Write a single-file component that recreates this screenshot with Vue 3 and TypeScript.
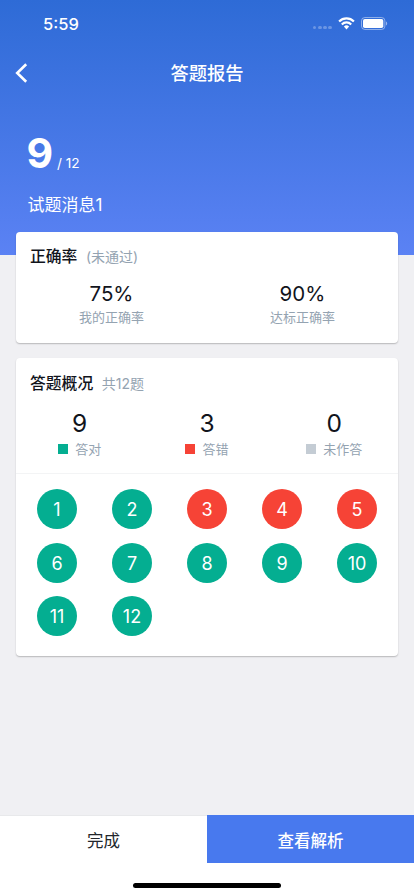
<script setup lang="ts">
type AnswerState = 'right' | 'wrong' | 'blank'

interface Summary {
  value: number
  label: string
  state: AnswerState
}

interface Question {
  no: number
  state: AnswerState
}

const total = 12
const wrongOnes = [3, 4, 5]

const questions: Question[] = Array.from({ length: total }, (_, i) => ({
  no: i + 1,
  state: wrongOnes.includes(i + 1) ? 'wrong' : 'right',
}))

const countOf = (state: AnswerState): number =>
  questions.filter((q) => q.state === state).length

const summaries: Summary[] = [
  { value: countOf('right'), label: '答对', state: 'right' },
  { value: countOf('wrong'), label: '答错', state: 'wrong' },
  { value: countOf('blank'), label: '未作答', state: 'blank' },
]

const rates = [
  { value: '75%', label: '我的正确率' },
  { value: '90%', label: '达标正确率' },
]
</script>

<template>
  <div class="screen">
    <header class="hero">
      <div class="status">
        <span class="time">5:59</span>
        <div class="indicators">
          <div class="signal"><i v-for="n in 4" :key="n"></i></div>
          <svg class="wifi" width="17" height="13" viewBox="0 0 17 13">
            <g fill="none" stroke="#fff" stroke-width="2.2">
              <path d="M1.1 4.5a10.4 10.4 0 0 1 14.8 0" />
              <path d="M3.8 7.4a6.6 6.6 0 0 1 9.4 0" />
            </g>
            <path d="M5.9 9.6a3.7 3.7 0 0 1 5.2 0L8.5 12.4z" fill="#fff" />
          </svg>
          <svg class="battery" width="27" height="13" viewBox="0 0 27 13">
            <rect x="0.5" y="0.5" width="23.4" height="12" rx="3.4" fill="none" stroke="#fff" stroke-opacity="0.45" />
            <rect x="2" y="2" width="20.3" height="9" rx="1.8" fill="#fff" />
            <path d="M25 4.5c1.6.6 1.6 3.4 0 4z" fill="#fff" fill-opacity="0.5" />
          </svg>
        </div>
      </div>

      <nav class="nav">
        <button class="back" type="button" aria-label="返回">
          <svg width="13" height="20" viewBox="0 0 13 20">
            <path d="M11.2 1.2 2.2 10l9 8.8" fill="none" stroke="#fff" stroke-width="2.6" />
          </svg>
        </button>
        <h1>答题报告</h1>
      </nav>

      <div class="score">
        <strong>{{ countOf('right') }}</strong>
        <span>/ {{ total }}</span>
      </div>
      <p class="paper">试题消息1</p>
    </header>

    <main class="content">
      <section class="card rate-card">
        <div class="card-title">
          <h2>正确率</h2>
          <span>(未通过)</span>
        </div>
        <div class="rates">
          <div v-for="r in rates" :key="r.label" class="rate">
            <b>{{ r.value }}</b>
            <span>{{ r.label }}</span>
          </div>
        </div>
      </section>

      <section class="card overview-card">
        <div class="card-title">
          <h2>答题概况</h2>
          <span>共{{ total }}题</span>
        </div>
        <div class="summaries">
          <div v-for="s in summaries" :key="s.state" class="summary">
            <b>{{ s.value }}</b>
            <span class="legend"><i :class="s.state"></i>{{ s.label }}</span>
          </div>
        </div>
        <div class="questions">
          <span v-for="q in questions" :key="q.no" class="question" :class="q.state">{{ q.no }}</span>
        </div>
      </section>
    </main>

    <footer class="footer">
      <div class="actions">
        <button class="done" type="button">完成</button>
        <button class="review" type="button">查看解析</button>
      </div>
      <div class="home-bar"></div>
    </footer>
  </div>
</template>

<style>
body {
  margin: 0;
  background: #f0f0f2;
}
</style>

<style scoped>
.screen {
  display: flex;
  flex-direction: column;
  box-sizing: border-box;
  width: 414px;
  height: 896px;
  overflow: hidden;
  background: #f0f0f3;
  color: #11141c;
  font-family: Inter, 'Noto Sans CJK SC', sans-serif;
}

h1,
h2,
p {
  margin: 0;
}

button {
  border: 0;
  padding: 0;
  background: none;
  font-family: inherit;
}

.hero {
  flex: none;
  box-sizing: border-box;
  height: 254.5px;
  background: linear-gradient(#2e6bd6, #5b82f4);
  color: #fff;
}

.status {
  display: flex;
  align-items: center;
  justify-content: space-between;
  height: 47px;
  padding: 0 26px 0 43px;
}

.time {
  font-size: 16.5px;
  font-weight: 500;
  line-height: 20px;
}

.indicators {
  display: flex;
  align-items: center;
}

.signal {
  display: flex;
  gap: 1.4px;
  margin: 8px 6px 0 0;
}

.signal i {
  width: 3.8px;
  height: 3.8px;
  border-radius: 50%;
  background: rgba(255, 255, 255, 0.28);
}

.battery {
  margin-left: 6px;
}

.nav {
  display: grid;
  grid-template-columns: 48px 1fr 48px;
  align-items: center;
  height: 51px;
}

.back {
  display: flex;
  padding-left: 15px;
}

.nav h1 {
  font-size: 18.3px;
  font-weight: 500;
  line-height: 28px;
  text-align: center;
}

.score {
  display: flex;
  align-items: baseline;
  gap: 5px;
  height: 50px;
  margin-top: 30px;
  padding-left: 26.5px;
}

.score strong {
  font-size: 41px;
  font-weight: 700;
  line-height: 50px;
  letter-spacing: -1.2px;
}

.score span {
  font-size: 13.7px;
}

.paper {
  margin-top: 13.5px;
  padding-left: 27.5px;
  font-size: 17px;
  line-height: 26px;
}

.content {
  display: flex;
  flex: 1;
  flex-direction: column;
  gap: 15.5px;
  margin-top: -23px;
  padding: 0 16px;
}

.card {
  box-sizing: border-box;
  border-radius: 4px;
  background: #fff;
  box-shadow: 0 1px 1.5px rgba(0, 0, 0, 0.24);
}

.rate-card {
  height: 111px;
}

.overview-card {
  height: 298px;
}

.card-title {
  display: flex;
  align-items: center;
  gap: 8.5px;
  height: 50px;
  padding-left: 14px;
}

.overview-card .card-title {
  height: 51px;
}

.card-title h2 {
  font-size: 15.8px;
  font-weight: 500;
  line-height: 24px;
}

.card-title span {
  color: #94a3b1;
  font-size: 14px;
  line-height: 24px;
}

.rates {
  display: grid;
  grid-template-columns: 1fr 1fr;
}

.rate {
  display: flex;
  flex-direction: column;
  align-items: center;
}

.rate b {
  font-size: 20.5px;
  font-weight: 400;
  line-height: 24px;
}

.rate span,
.legend {
  color: #94a3b1;
  font-size: 13px;
  line-height: 20px;
}

.rate span {
  margin-top: 1px;
}

.summaries {
  display: grid;
  grid-template-columns: repeat(3, 1fr);
  height: 63.5px;
  border-bottom: 1px solid #f3f4f5;
}

.summary {
  display: flex;
  flex-direction: column;
  align-items: center;
}

.summary b {
  font-size: 24.5px;
  font-weight: 400;
  line-height: 28px;
}

.legend {
  display: flex;
  align-items: center;
  gap: 7px;
  margin-top: 2px;
}

.legend i {
  width: 10px;
  height: 10px;
}

.questions {
  display: grid;
  grid-template-columns: repeat(5, 40px);
  justify-content: space-between;
  row-gap: 13.5px;
  padding: 15.5px 21px 0;
}

.question {
  display: flex;
  align-items: center;
  justify-content: center;
  box-sizing: border-box;
  height: 40px;
  padding-top: 1px;
  border-radius: 50%;
  color: #fff;
  font-size: 18px;
}

.right {
  background: #04ae91;
}

.wrong {
  background: #f64336;
}

.blank {
  background: #c4ccd4;
}

.footer {
  flex: none;
  height: 81px;
  background: #fff;
}

.actions {
  display: grid;
  grid-template-columns: 1fr 1fr;
  height: 48px;
}

.actions button {
  padding-top: 1px;
  font-size: 16.5px;
}

.done {
  box-shadow: inset 0 1px #e8e9eb;
  color: #22262c;
}

.review {
  background: #4879ee;
  color: #fff;
  font-weight: 500;
}

.home-bar {
  width: 148px;
  height: 5px;
  margin: 20px auto 0;
  border-radius: 3px;
  background: #000;
}
</style>
